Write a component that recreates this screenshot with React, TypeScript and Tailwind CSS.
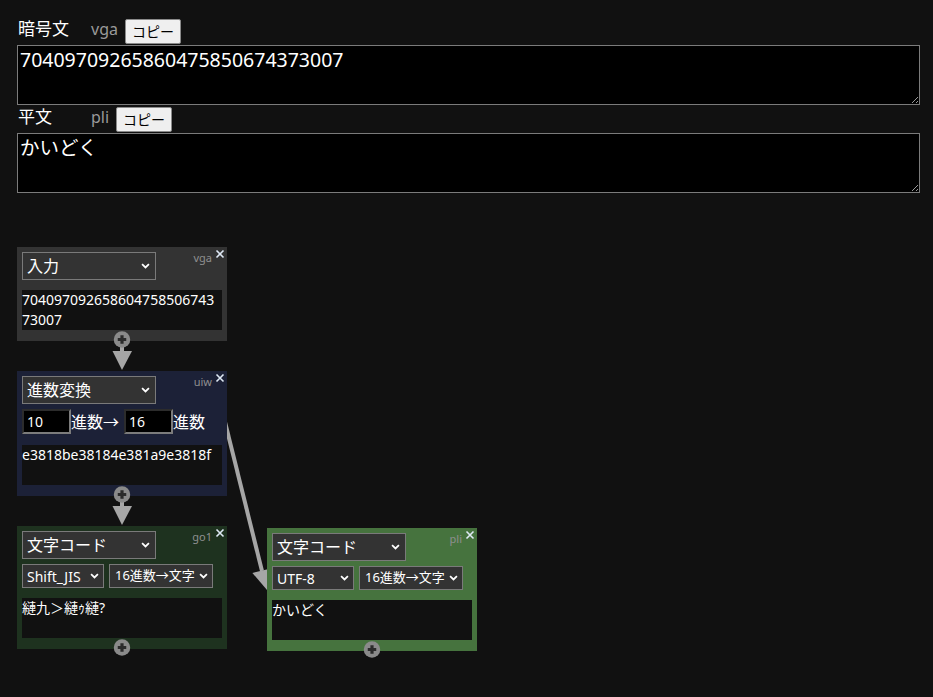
import type { ReactNode } from 'react'

// Small chevron used by the custom-drawn selects.
function Chevron({ className }: { className: string }) {
  return (
    <svg
      viewBox="0 0 10 7"
      className={`pointer-events-none absolute ${className}`}
      fill="none"
      stroke="#fff"
      strokeWidth={2}
    >
      <path d="M1 1.2l4 4 4-4" />
    </svg>
  )
}

function Select({
  value,
  width,
  size,
}: {
  value: string
  width: string
  size: 'lg' | 'sm' | 'xs'
}) {
  const lg = size === 'lg'
  return (
    <div className={`relative ${width}`}>
      <select
        defaultValue={value}
        className={[
          'block w-full appearance-none rounded-none border border-[#7a7a7a] bg-[#333] text-white outline-none',
          lg ? 'h-[28px] pl-[4px] text-[16px]' : 'h-[24px] pl-[4px]',
          size === 'sm' ? 'text-[14px]' : '',
          size === 'xs' ? 'text-[13px] pl-[5px]' : '',
        ].join(' ')}
      >
        <option>{value}</option>
      </select>
      <Chevron
        className={
          lg
            ? 'right-[6px] top-[11px] h-[6px] w-[9px]'
            : 'right-[5px] top-[9px] h-[6px] w-[9px]'
        }
      />
    </div>
  )
}

function PlusDot() {
  return (
    <svg
      viewBox="0 0 16 16"
      className="absolute bottom-[-7px] left-1/2 h-[17px] w-[17px] -translate-x-1/2"
    >
      <circle cx="8" cy="8" r="7.8" fill="#8a8a8a" />
      <path d="M8 4v8M4 8h8" stroke="#2b2b2b" strokeWidth={3} />
    </svg>
  )
}

function Node({
  pos,
  bg,
  tag,
  children,
}: {
  pos: string
  bg: string
  tag: string
  children: ReactNode
}) {
  return (
    <div className={`absolute w-[210px] px-[5px] pt-[5px] pb-[11px] ${pos} ${bg}`}>
      <div className="absolute right-[2px] top-[1px] flex items-start gap-[3px]">
        <span className="mt-[3px] text-[11px] leading-[13px] text-[#8f8f8f]">{tag}</span>
        <svg viewBox="0 0 10 10" className="mt-[1px] h-[10px] w-[10px]" stroke="#dfe9f5" strokeWidth={1.6}>
          <path d="M1.5 1.5l7 7M8.5 1.5l-7 7" />
        </svg>
      </div>
      {children}
      <PlusDot />
    </div>
  )
}

function Output({ text, mt }: { text: string; mt: string }) {
  return (
    <div className={`h-[40px] w-[200px] break-all bg-[#111] text-[14px] leading-[20px] text-white ${mt}`}>
      {text}
    </div>
  )
}

function RadixInput({ value }: { value: string }) {
  return (
    <input
      defaultValue={value}
      className="h-[25px] w-[49px] border-2 border-b-[#7c7c7c] border-l-[#2c2c2c] border-r-[#7c7c7c] border-t-[#2c2c2c] bg-black pl-[3px] text-[14px] text-white outline-none"
    />
  )
}

function CopyRow({ label, id, h }: { label: string; id: string; h: string }) {
  return (
    <div className={`flex items-end ${h}`}>
      <span className="mb-[4px] w-[74px] pl-[1px] text-[17px] leading-[24px]">{label}</span>
      <span className="mb-[6px] text-[16px] leading-[20px] text-[#9a9a9a]">{id}</span>
      <button
        type="button"
        className="mb-[1px] ml-[7px] h-[25px] rounded-[2px] border border-[#8a8a8a] bg-[#efefef] px-[6px] text-[14px] leading-[20px] text-black"
      >
        コピー
      </button>
    </div>
  )
}

export default function App() {
  return (
    <div className="min-h-screen bg-[#111] font-['Noto_Sans','Noto_Sans_CJK_JP',sans-serif] text-white [color-scheme:dark]">
      <div className="px-[17px] pt-[19px]">
        <CopyRow label="暗号文" id="vga" h="h-[26px]" />
        <textarea
          defaultValue="70409709265860475850674373007"
          className="block h-[60px] w-[903px] border border-[#7b7b7b] bg-black px-[2px] pt-[2px] text-[19.5px] leading-[24px] text-white outline-none"
        />
        <CopyRow label="平文" id="pli" h="h-[28px]" />
        <textarea
          defaultValue="かいどく"
          className="block h-[60px] w-[903px] border border-[#7b7b7b] bg-black px-[2px] pt-[2px] text-[19.5px] leading-[24px] text-white outline-none"
        />
      </div>

      {/* node canvas */}
      <div className="relative mt-[47px] h-[457px]">
        <svg className="pointer-events-none absolute inset-0 h-full w-full" fill="#a6a6a6">
          <rect x="120" y="100" width="4" height="14" />
          <polygon points="112.5,111 132,111 122,130" />
          <rect x="120" y="255" width="4" height="14" />
          <polygon points="112.5,266 132,266 122,285" />
          <line x1="224" y1="178" x2="262" y2="331" stroke="#a6a6a6" strokeWidth={4} />
          <polygon points="252.4,333 271.9,328.2 267,350" />
        </svg>

        <Node pos="left-[17px] top-[7px]" bg="bg-[#333]" tag="vga">
          <Select value="入力" width="w-[134px]" size="lg" />
          <Output text="70409709265860475850674373007" mt="mt-[10px]" />
        </Node>

        <Node pos="left-[17px] top-[131px]" bg="bg-[#1c2137]" tag="uiw">
          <Select value="進数変換" width="w-[134px]" size="lg" />
          <div className="mt-[5px] flex h-[25px] items-center text-[16px]">
            <RadixInput value="10" />
            <span className="mr-[5px]">進数→</span>
            <RadixInput value="16" />
            <span>進数</span>
          </div>
          <Output text="e3818be38184e381a9e3818f" mt="mt-[11px]" />
        </Node>

        <Node pos="left-[17px] top-[286px]" bg="bg-[#1e321f]" tag="go1">
          <Select value="文字コード" width="w-[134px]" size="lg" />
          <div className="mt-[5px] flex gap-[5px]">
            <Select value="Shift_JIS" width="w-[82px]" size="sm" />
            <Select value="16進数→文字" width="w-[104px]" size="xs" />
          </div>
          <Output text="縺九＞縺ｩ縺?" mt="mt-[10px]" />
        </Node>

        <Node pos="left-[267px] top-[288px]" bg="bg-[#46733e]" tag="pli">
          <Select value="文字コード" width="w-[134px]" size="lg" />
          <div className="mt-[5px] flex gap-[5px]">
            <Select value="UTF-8" width="w-[82px]" size="sm" />
            <Select value="16進数→文字" width="w-[104px]" size="xs" />
          </div>
          <Output text="かいどく" mt="mt-[10px]" />
        </Node>
      </div>
    </div>
  )
}
